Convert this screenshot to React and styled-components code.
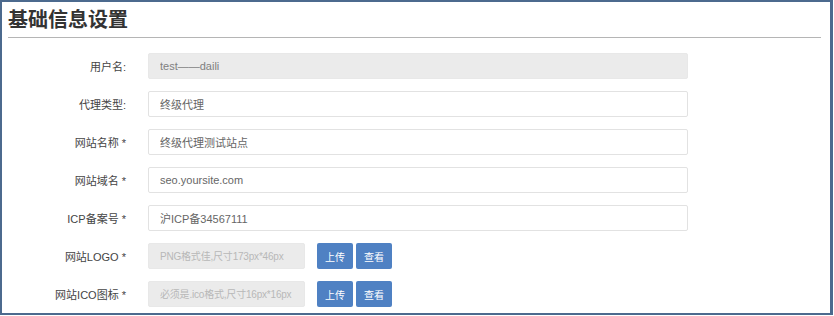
import React from "react";
import styled, { createGlobalStyle } from "styled-components";

const GlobalStyle = createGlobalStyle`
  html, body {
    margin: 0;
    padding: 0;
    background: #ffffff;
  }
  body {
    font-family: "Liberation Sans", "Noto Sans CJK SC", sans-serif;
  }
`;

const fields = [
  { label: "用户名:", value: "test——daili", disabled: true },
  { label: "代理类型:", value: "终级代理" },
  { label: "网站名称 *", value: "终级代理测试站点" },
  { label: "网站域名 *", value: "seo.yoursite.com" },
  { label: "ICP备案号 *", value: "沪ICP备34567111" },
  { label: "网站LOGO *", placeholder: "PNG格式佳,尺寸173px*46px", upload: true },
  { label: "网站ICO图标 *", placeholder: "必须是.ico格式,尺寸16px*16px", upload: true },
];

function App() {
  return (
    <>
      <GlobalStyle />
      <Frame>
        <Title>基础信息设置</Title>
        <Form>
          {fields.map((f) => (
            <Row key={f.label}>
              <Label>{f.label}</Label>
              {f.upload ? (
                <UploadGroup>
                  <Input short disabled placeholder={f.placeholder} readOnly />
                  <Btn>上传</Btn>
                  <Btn>查看</Btn>
                </UploadGroup>
              ) : (
                <Input
                  disabled={f.disabled}
                  defaultValue={f.value}
                  readOnly
                />
              )}
            </Row>
          ))}
        </Form>
      </Frame>
    </>
  );
}

const Frame = styled.div`
  width: 833px;
  height: 315px;
  box-sizing: border-box;
  border: 2px solid #4c6a8e;
  border-right-width: 3px;
  overflow: hidden;
  background: #fff;
`;

const Title = styled.h2`
  margin: 0 9px 0 6px;
  padding: 5px 0 6px 0;
  height: 24px;
  line-height: 24px;
  font-size: 20px;
  font-weight: bold;
  color: #333;
  border-bottom: 1px solid #b5b5b5;
  font-family: "Noto Sans CJK SC", sans-serif;
`;

const Form = styled.div`
  display: flex;
  flex-direction: column;
  gap: 12px;
  padding: 15px 0 0 6px;
`;

const Row = styled.div`
  display: flex;
  align-items: center;
  height: 26px;
`;

const Label = styled.div`
  width: 118px;
  margin-right: 22px;
  text-align: right;
  font-size: 11px;
  color: #444;
  font-family: "Liberation Sans", "Noto Sans CJK SC", sans-serif;
`;

const Input = styled.input`
  width: ${(p) => (p.short ? "157px" : "540px")};
  height: 26px;
  box-sizing: border-box;
  padding: ${(p) => (p.short ? "0 6px 0 11px" : "0 11px")};
  border: 1px solid ${(p) => (p.disabled ? "#e8e8e8" : "#e2e2e2")};
  border-radius: 2px;
  background: ${(p) => (p.disabled ? "#ebebeb" : "#fff")};
  color: ${(p) => (p.disabled ? "#808080" : "#666")};
  font-size: ${(p) => (p.short ? "10px" : "11px")};
  letter-spacing: ${(p) => (p.short ? "-0.2px" : "0")};
  font-family: "Liberation Sans", "Noto Sans CJK SC", sans-serif;
  outline: none;
  &::placeholder {
    color: #b8b8b8;
  }
`;

const UploadGroup = styled.div`
  display: flex;
  align-items: center;
  gap: 3px;
  & > input {
    margin-right: 9px;
  }
`;

const Btn = styled.button`
  width: 36px;
  height: 26px;
  padding: 0;
  border: none;
  border-radius: 2px;
  background: #4f81c3;
  color: #fff;
  font-size: 10px;
  font-family: "Noto Sans CJK SC", sans-serif;
`;

export default App;
